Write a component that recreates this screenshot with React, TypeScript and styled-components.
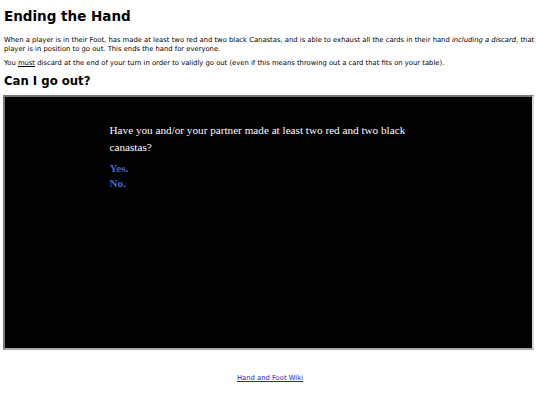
import styled, { createGlobalStyle } from "styled-components";

const GlobalStyle = createGlobalStyle`
  html, body {
    margin: 0;
    background: #ffffff;
  }
  body {
    padding: 0 4px;
    font-family: "DejaVu Sans", Verdana, sans-serif;
    color: #000000;
  }
`;

const Page = styled.div`
  display: flex;
  flex-direction: column;
`;

const Title = styled.h1`
  font-size: 13.5px;
  font-weight: bold;
  margin: 8px 0 0;
  line-height: 16px;
`;

const Para = styled.p<{ $gap: number }>`
  font-size: 6.8px;
  line-height: 8.5px;
  margin: ${(p) => p.$gap}px 0 0;
`;

const SubTitle = styled.h2`
  font-size: 11.7px;
  font-weight: bold;
  margin: 6px 0 0;
  line-height: 14px;
`;

const Frame = styled.div`
  box-sizing: border-box;
  margin-top: 7px;
  margin-left: -1px;
  width: 531px;
  height: 255px;
  background: #000000;
  border: 2px solid;
  border-color: #7a7a7a #d8d8d8 #a8a8a8 #7a7a7a;
  display: flex;
  justify-content: center;
`;

const Question = styled.div`
  width: 318px;
  padding-top: 25px;
  font-family: "Liberation Serif", "Times New Roman", serif;
  color: #ffffff;
`;

const Prompt = styled.p`
  font-size: 11.2px;
  line-height: 17px;
  margin: 0 0 5px;
`;

const Choice = styled.a`
  display: block;
  color: #4466cc;
  font-weight: bold;
  font-size: 11.2px;
  line-height: 15px;
  text-decoration: none;
`;

const Footer = styled.div`
  text-align: center;
  margin-top: 23px;
  font-size: 6.8px;
  line-height: 10px;
`;

const WikiLink = styled.a`
  color: #2222ee;
`;

export default function App() {
  return (
    <Page>
      <GlobalStyle />
      <Title>Ending the Hand</Title>
      <Para $gap={12}>
        When a player is in their Foot, has made at least two red and two black Canastas, and is able to
        exhaust all the cards in their hand <em>including a discard</em>, that player is in position to go out.
        This ends the hand for everyone.
      </Para>
      <Para $gap={6}>
        You <u>must</u> discard at the end of your turn in order to validly go out (even if this means
        throwing out a card that fits on your table).
      </Para>
      <SubTitle>Can I go out?</SubTitle>
      <Frame>
        <Question>
          <Prompt>Have you and/or your partner made at least two red and two black canastas?</Prompt>
          <Choice href="#">Yes.</Choice>
          <Choice href="#">No.</Choice>
        </Question>
      </Frame>
      <Footer>
        <WikiLink href="#">Hand and Foot Wiki</WikiLink>
      </Footer>
    </Page>
  );
}
